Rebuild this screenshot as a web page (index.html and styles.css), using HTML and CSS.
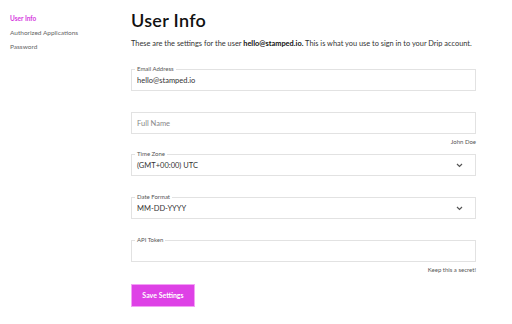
FILE: index.html
```html
<!DOCTYPE html>
<html>
<head>
    <title>User Info</title>
    <link rel="stylesheet" href="styles.css">
</head>
<body>
    <div class="layout">
        <nav class="sidebar">
            <a href="#" class="active">User Info</a>
            <a href="#">Authorized Applications</a>
            <a href="#">Password</a>
        </nav>

        <main class="content">
            <h1>User Info</h1>
            <p class="intro">These are the settings for the user <b>hello@stamped.io.</b> This is what you use to sign in to your Drip account.</p>

            <form class="settings">
                <div class="field">
                    <label>Email Address</label>
                    <input type="text" value="hello@stamped.io" />
                </div>

                <div class="group">
                    <div class="field">
                        <input type="text" placeholder="Full Name" />
                    </div>
                    <div class="hint">John Doe</div>
                </div>

                <div class="field">
                    <label>Time Zone</label>
                    <div class="select">
                        <span>(GMT+00:00) UTC</span>
                        <svg width="7" height="5" viewBox="0 0 7 5"><path d="M1 1l2.5 2.5L6 1" fill="none" stroke="#555" stroke-width="1.2"/></svg>
                    </div>
                </div>

                <div class="field">
                    <label>Date Format</label>
                    <div class="select">
                        <span>MM-DD-YYYY</span>
                        <svg width="7" height="5" viewBox="0 0 7 5"><path d="M1 1l2.5 2.5L6 1" fill="none" stroke="#555" stroke-width="1.2"/></svg>
                    </div>
                </div>

                <div class="group">
                    <div class="field">
                        <label>API Token</label>
                        <input type="text" />
                    </div>
                    <div class="hint">Keep this a secret!</div>
                </div>

                <div>
                    <button type="button">Save Settings</button>
                </div>
            </form>
        </main>
    </div>
</body>
</html>
```

FILE: styles.css
```css
body {
    margin: 0;
    font-family: "Lato", "Noto Sans", sans-serif;
    color: #222;
    background: #fff;
}
.layout {
    display: flex;
}
.sidebar {
    width: 131px;
    padding: 15px 0 0 10px;
    display: flex;
    flex-direction: column;
    gap: 7px;
    box-sizing: border-box;
}
.sidebar a {
    font-size: 6.5px;
    color: #666;
    text-decoration: none;
    line-height: 7px;
}
.sidebar a.active {
    color: #d63be0;
    font-weight: 700;
}
.content {
    width: 345px;
    padding-top: 10px;
}
h1 {
    margin: 0;
    font-size: 18px;
    font-weight: 600;
    color: #111;
    line-height: 20px;
    letter-spacing: 0.3px;
}
.intro {
    margin: 9px 0 0;
    font-size: 7.4px;
    color: #333;
    line-height: 9px;
}
.intro b {
    color: #111;
}
.settings {
    margin-top: 21px;
    display: flex;
    flex-direction: column;
    gap: 21px;
}
.group {
    display: flex;
    flex-direction: column;
}
.field {
    position: relative;
    padding: 0 5px;
    border: 1px solid #e2e2e2;
    height: 22px;
    box-sizing: border-box;
    display: flex;
    align-items: center;
}
.field label {
    position: absolute;
    top: -4px;
    left: 3px;
    padding: 0 2px;
    background: #fff;
    font-size: 6px;
    color: #555;
    line-height: 6px;
}
.field input {
    border: 0;
    outline: 0;
    padding: 0;
    width: 100%;
    font-family: inherit;
    font-size: 7.5px;
    color: #333;
    background: transparent;
}
.field input::placeholder {
    color: #888;
}
.select {
    flex: 1;
    display: flex;
    justify-content: space-between;
    align-items: center;
    font-size: 7.5px;
    color: #333;
    padding-right: 7px;
}
.hint {
    align-self: flex-end;
    font-size: 6px;
    color: #555;
    line-height: 7px;
    margin-top: 4px;
    margin-bottom: -12px;
}
button {
    width: 64px;
    height: 23px;
    border: 1px solid #f3a0f6;
    background: #de41e6;
    color: #fff;
    font-family: inherit;
    font-size: 7px;
    font-weight: 700;
    padding: 0;
}
```
